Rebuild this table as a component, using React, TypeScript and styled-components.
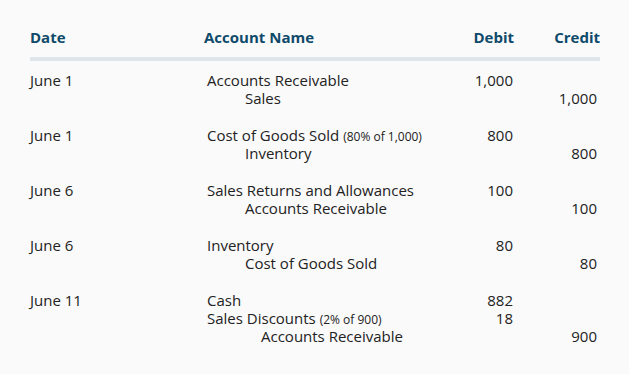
import React from "react";
import styled, {createGlobalStyle} from "styled-components";

const GlobalStyle = createGlobalStyle`
  html, body {
    margin: 0;
    padding: 0;
    background: #fafafa;
  }
  body {
    font-family: "Open Sans", "Liberation Sans", sans-serif;
    color: #222;
  }
`;

const Page = styled.div`
  width: 629px;
  height: 374px;
  box-sizing: border-box;
  padding: 27px 29px 0 30px;
  background: #fafafa;
`;

const HeaderRow = styled.div`
  display: grid;
  grid-template-columns: 174px 1fr 60px 86px;
  padding-bottom: 10px;
  border-bottom: 4px solid #dfe6eb;
`;

const TH = styled.div<{ $right?: boolean }>`
  font-size: 15px;
  font-weight: 700;
  line-height: 20px;
  color: #0f4a6a;
  text-align: ${p => (p.$right ? "right" : "left")};
`;

const Body = styled.div`
  display: flex;
  flex-direction: column;
  gap: 19px;
  padding-top: 10px;
`;

const Entry = styled.div`
  display: grid;
  grid-template-columns: 174px 1fr 60px 86px;
  grid-auto-rows: 18px;
  font-size: 15px;
  line-height: 18px;
`;

const DateCell = styled.div`
  padding-left: 0;
`;

const AccountCell = styled.div<{ $indent: number }>`
  padding-left: ${p => 3 + p.$indent}px;
  white-space: nowrap;
`;

const Note = styled.span`
  font-size: 12px;
`;

const Amount = styled.div<{ $pad?: number }>`
  text-align: right;
  padding-right: ${p => p.$pad || 0}px;
`;

type Line = { account: string, note?: string, indent: number, debit?: string, credit?: string }
type JournalEntry = { date: string, lines: Line[] }

const entries: JournalEntry[] = [
    {
        date: "June 1", lines: [
            {account: "Accounts Receivable", indent: 0, debit: "1,000"},
            {account: "Sales", indent: 38, credit: "1,000"},
        ]
    },
    {
        date: "June 1", lines: [
            {account: "Cost of Goods Sold", note: "(80% of 1,000)", indent: 0, debit: "800"},
            {account: "Inventory", indent: 38, credit: "800"},
        ]
    },
    {
        date: "June 6", lines: [
            {account: "Sales Returns and Allowances", indent: 0, debit: "100"},
            {account: "Accounts Receivable", indent: 38, credit: "100"},
        ]
    },
    {
        date: "June 6", lines: [
            {account: "Inventory", indent: 0, debit: "80"},
            {account: "Cost of Goods Sold", indent: 38, credit: "80"},
        ]
    },
    {
        date: "June 11", lines: [
            {account: "Cash", indent: 0, debit: "882"},
            {account: "Sales Discounts", note: "(2% of 900)", indent: 0, debit: "18"},
            {account: "Accounts Receivable", indent: 54, credit: "900"},
        ]
    },
];

const App: React.FC = () => {
    return (
        <Page>
            <GlobalStyle/>
            <HeaderRow>
                <TH>Date</TH>
                <TH>Account Name</TH>
                <TH $right>Debit</TH>
                <TH $right>Credit</TH>
            </HeaderRow>
            <Body>
                {
                    entries.map((entry, i) =>
                        <Entry key={i}>
                            {
                                entry.lines.map((line, j) =>
                                    <React.Fragment key={j}>
                                        <DateCell>{j === 0 ? entry.date : ""}</DateCell>
                                        <AccountCell $indent={line.indent}>
                                            {line.account}
                                            {line.note ? <> <Note>{line.note}</Note></> : null}
                                        </AccountCell>
                                        <Amount $pad={1}>{line.debit}</Amount>
                                        <Amount $pad={3}>{line.credit}</Amount>
                                    </React.Fragment>
                                )
                            }
                        </Entry>
                    )
                }
            </Body>
        </Page>
    )
};

export default App;
